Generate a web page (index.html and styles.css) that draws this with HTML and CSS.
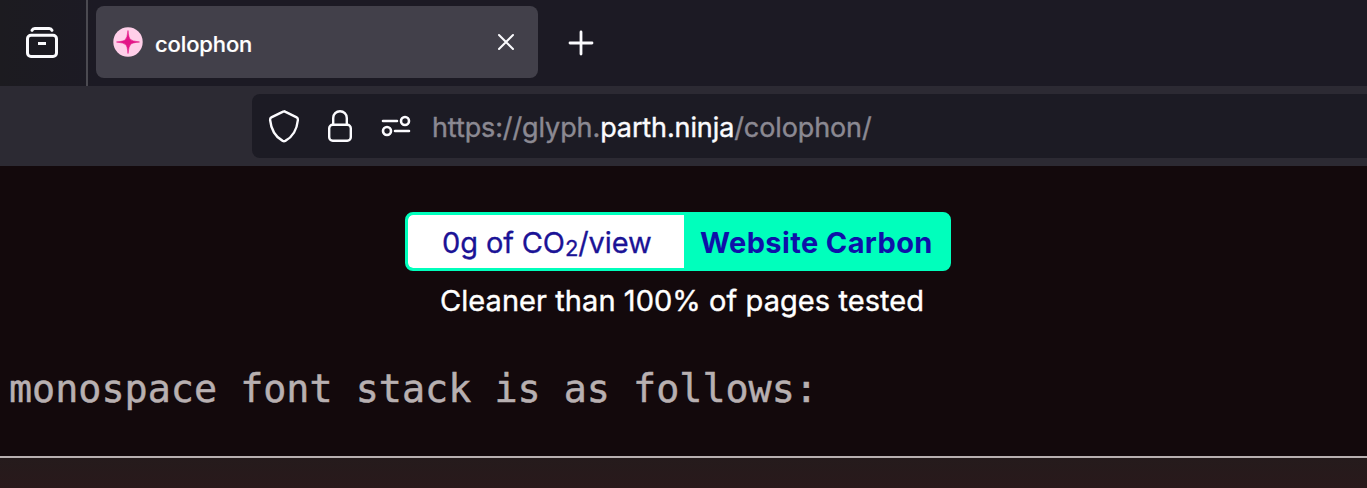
FILE: index.html
```html
<!DOCTYPE html>
<html lang="en">
<head>
<meta charset="utf-8">
<title>colophon</title>
<link rel="stylesheet" href="styles.css">
</head>
<body>
<header class="tabs">
  <div class="history">
    <svg width="36" height="36" viewBox="0 0 36 36" fill="none" stroke="#fbfbfe" stroke-width="3" stroke-linecap="round"><rect x="4.500" y="11.200" width="29" height="21.300" rx="3.500"/><path d="M9 6.300c.5-1.200 1.300-1.800 2.800-1.800h14.400c1.500 0 2.300.6 2.800 1.800"/><path d="M15 19.500h8" stroke-linecap="butt"/></svg>
  </div>
  <div class="tab">
    <svg class="favicon" width="30" height="30" viewBox="0 0 30 30"><circle cx="15" cy="15" r="14.700" fill="#ffcfe9"/><path d="M15 3.500Q15.700 11 17.200 12.200Q19 14.300 26.500 15Q19 15.700 17.800 17.200Q15.700 19 15 26.500Q14.300 19 12.800 17.800Q11 15.700 3.500 15Q11 14.300 12.200 12.800Q14.300 11 15 3.500Z" fill="#e31587" stroke="#e31587" stroke-width=".6"/></svg>
    <span class="title">colophon</span>
    <svg class="close" width="18" height="18" viewBox="0 0 18 18" stroke="#fbfbfe" stroke-width="2" stroke-linecap="round"><path d="M2 2l14 14M16 2L2 16"/></svg>
  </div>
  <svg class="plus" width="26" height="26" viewBox="0 0 26 26" stroke="#fbfbfe" stroke-width="2.800" stroke-linecap="round"><path d="M13 2v22M2 13h22"/></svg>
</header>
<nav class="toolbar">
  <div class="address">
    <svg width="32" height="34" viewBox="0 0 32 34" fill="none" stroke="#fbfbfe" stroke-width="2.400" stroke-linejoin="round"><path d="M16 2.200L28.700 8.400C29.900 9 30 9.800 29.900 11C28.800 21.500 24.500 28 17.300 31.900Q16 32.500 14.700 31.900C7.500 28 3.200 21.500 2.100 11C2 9.800 2.100 9 3.300 8.400L14.600 2.800Q16 1.900 17.400 2.800"/></svg>
    <svg class="lock" width="26" height="34" viewBox="0 0 26 34" fill="none" stroke="#fbfbfe" stroke-width="2.400"><rect x="2.200" y="15.700" width="21.600" height="16.100" rx="3.500"/><path d="M6.200 15.700V9a6.800 6.800 0 0 1 13.600 0v6.700"/></svg>
    <svg class="sliders" width="30" height="22" viewBox="0 0 30 22" fill="none" stroke="#fbfbfe" stroke-width="2.600" stroke-linecap="round"><path d="M2 6h14M14 16h14"/><circle cx="24" cy="6" r="4"/><circle cx="6" cy="16" r="4"/></svg>
    <span class="url">https://glyph.<b>parth.ninja</b>/colophon/</span>
  </div>
</nav>
<main>
  <div class="badge">
    <span class="score">0g of CO<sub>2</sub>/view</span>
    <span class="brand">Website Carbon</span>
  </div>
  <p class="note"><span>Cleaner than 100% of pages tested</span></p>
  <p class="mono">monospace font stack is as follows:</p>
</main>
<section class="panel"></section>
</body>
</html>
```
FILE: styles.css
```css
* { box-sizing: border-box; }
body { margin: 0; height: 488px; overflow: hidden; background: #13090c; color: #fff; font-family: Inter, "Liberation Sans", sans-serif; }
svg { display: block; flex: none; }
.tabs { height: 86px; display: flex; align-items: center; background: linear-gradient(90deg, #1c1b20, #1c1a24 96px); }
.history { width: 88px; height: 86px; flex: none; border-right: 2px solid #4b4a51; padding: 24px 0 0 23px; }
.tab { width: 442px; height: 72px; margin-left: 8px; margin-bottom: 2px; padding: 0 23px 0 17px; display: flex; align-items: center; background: #42404a; border-radius: 8px; }
.title { margin: 3px auto 0 12px; font-size: 22px; font-weight: 500; line-height: 30px; letter-spacing: -0.12px; white-space: nowrap; -webkit-text-stroke: 0.2px; }
.plus { margin-left: 30px; }
.toolbar { height: 80px; padding: 8px 0 8px 252px; background: #2c2a33; }
.address { height: 64px; display: flex; align-items: center; padding-left: 16px; background: #1c1b24; border-radius: 8px 0 0 8px; }
.lock { margin-left: 27px; }
.sliders { margin-left: 28px; }
.url { margin: 3px 0 0 21px; font-size: 27px; line-height: 36px; letter-spacing: -0.11px; color: #8b8992; white-space: nowrap; -webkit-text-stroke: 0.4px; }
.url b { font-weight: 400; color: #fbfbfe; }
main { height: 290px; padding-top: 46px; }
.badge { width: 546px; height: 59px; margin-left: 405px; display: flex; border: 3px solid #00ffbc; border-radius: 8px; background: #00ffbc; color: #0e11a8; font-size: 29px; line-height: 55px; white-space: nowrap; overflow: hidden; }
.score { width: 276px; padding-left: 34px; background: #fff; border-radius: 5px 0 0 5px; color: #1b1396; letter-spacing: -0.12px; -webkit-text-stroke: 0.3px; }
.score sub { font-size: 22px; line-height: 0; vertical-align: -3px; }
.brand { padding-left: 16px; font-weight: 700; letter-spacing: 0.38px; }
.note { margin: 10px 0 0 440px; font-size: 29px; line-height: 40px; letter-spacing: 0.06px; white-space: nowrap; -webkit-text-stroke: 0.4px; }
.mono { margin: 43px 0 0 9px; font: 38.4px/50px "DejaVu Sans Mono", monospace; color: #b8b0b1; white-space: pre; -webkit-text-stroke: 0.5px; }
.panel { height: 32px; border-top: 2px solid #b8b0b1; background: linear-gradient(#251b1c, #29191b); }
```
